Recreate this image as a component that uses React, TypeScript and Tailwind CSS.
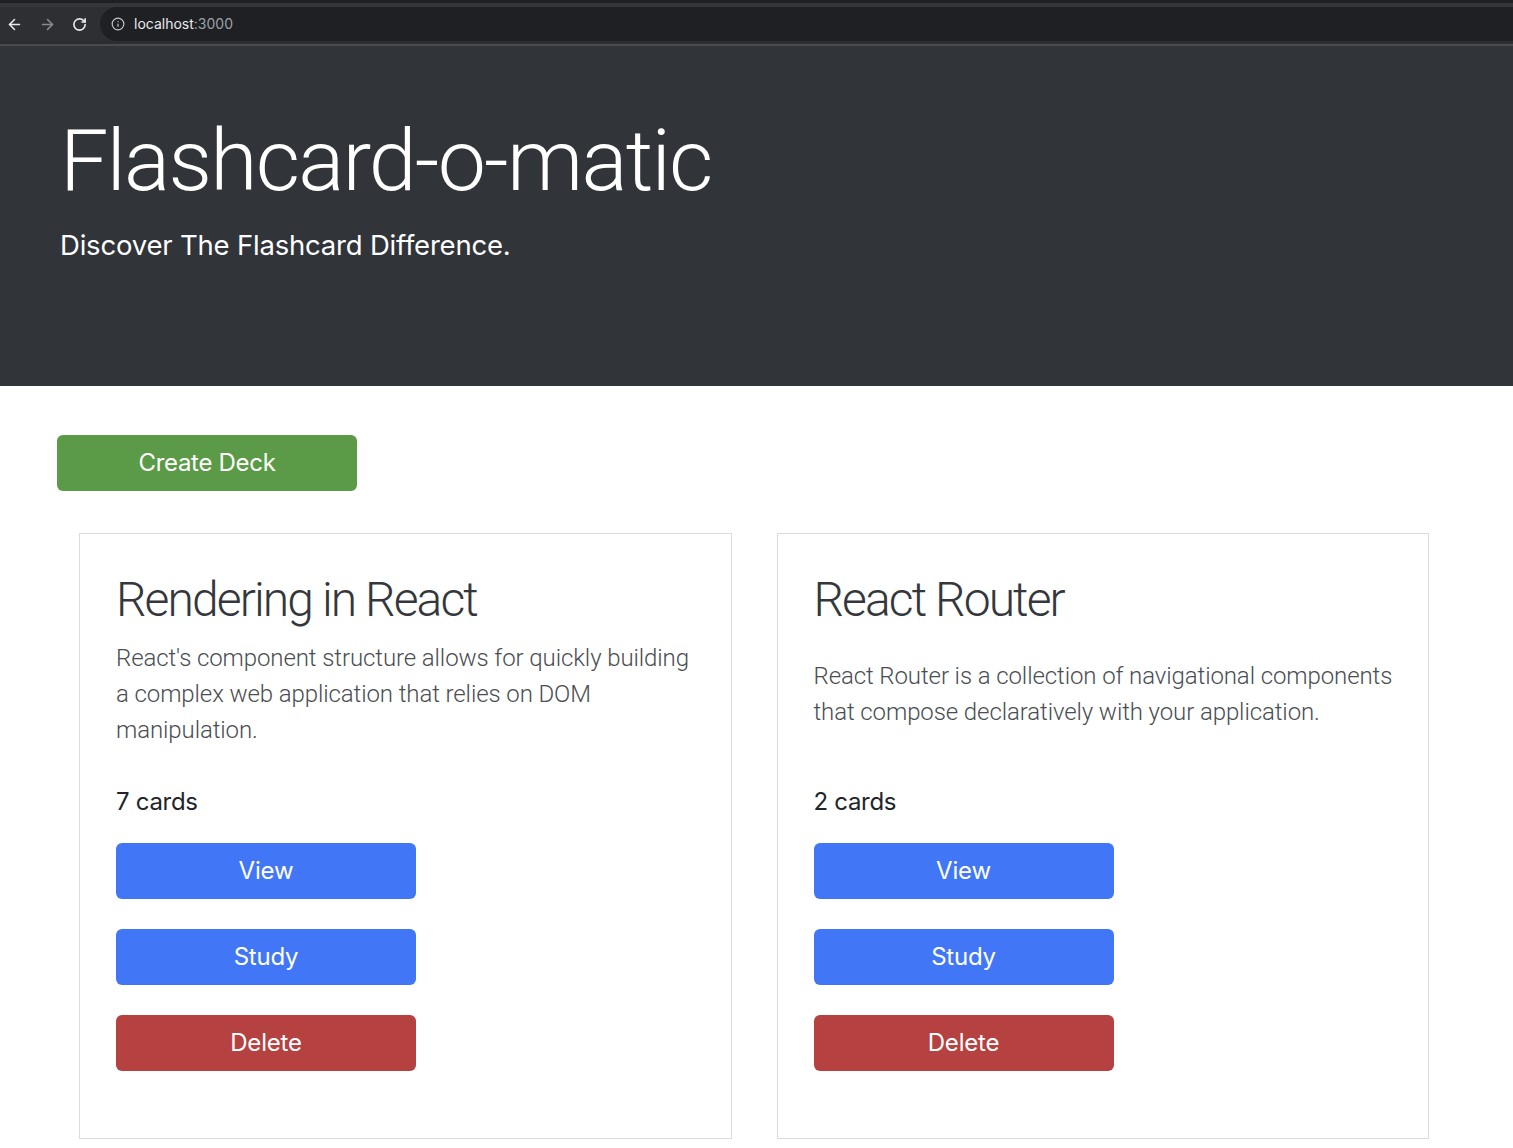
import React from "react";
import { ArrowLeft, ArrowRight, RotateCw, Info } from "lucide-react";

const decks = [
  {
    name: "Rendering in React",
    lines: [
      "React's component structure allows for quickly building",
      "a complex web application that relies on DOM",
      "manipulation.",
    ],
    count: 7,
  },
  {
    name: "React Router",
    lines: [
      "React Router is a collection of navigational components",
      "that compose declaratively with your application.",
    ],
    count: 2,
  },
];

const light = { fontFamily: "Roboto, 'Noto Sans', sans-serif" };

function BrowserBar() {
  return (
    <div className="flex flex-col bg-[#2e2f33]">
      <div className="h-[3px] bg-[#1f2023]" />
      <div className="h-[4px] bg-[#35363a]" />
      <div className="flex h-[34px] items-center">
        <div className="flex w-[100px] items-center pl-[6px] gap-[16px] text-[#e8eaed]">
          <ArrowLeft size={17} strokeWidth={2.2} />
          <ArrowRight size={17} strokeWidth={2.2} className="text-[#8a8c90]" />
          <RotateCw size={15} strokeWidth={2.6} />
        </div>
        <div className="flex h-full flex-1 items-center rounded-l-full bg-[#1f2023] pl-[11px]">
          <Info size={14} strokeWidth={2} className="text-[#c4c7c5]" />
          <span className="ml-[9px] text-[14px] leading-none text-[#e8eaed]">
            localhost<span className="text-[#9aa0a6]">:3000</span>
          </span>
        </div>
      </div>
      <div className="h-[3px] bg-[#2c2d30]" />
      <div className="h-[2px] bg-[#4a4b4f]" />
    </div>
  );
}

function DeckCard({ name, lines, count }: { name: string; lines: string[]; count: number }) {
  return (
    <div className="flex flex-col border border-[#dcdcdc] bg-white px-[36px] pt-[36px] pb-[67px]">
      <h2 style={light} className="text-[48px] font-light leading-[60px] tracking-[-1.9px] text-[#34373b]">
        {name}
      </h2>
      <div className="mt-[9px] flex h-[110px] items-center">
        <p style={light} className="text-[24px] font-light leading-[36px] tracking-[-0.1px] text-[#4a4d52]">
          {lines.map((l) => (
            <span key={l} className="block whitespace-nowrap">
              {l}
            </span>
          ))}
        </p>
      </div>
      <p className="mt-[35px] text-[24px] leading-[36px] tracking-[-0.3px] text-[#212529]">{count} cards</p>
      <div className="mt-[23px] flex flex-col gap-[30px]">
        <button className="h-[56px] w-[300px] rounded-[6px] bg-[#4177f7] text-[24px] tracking-[-0.2px] text-white">View</button>
        <button className="h-[56px] w-[300px] rounded-[6px] bg-[#4177f7] text-[24px] tracking-[-0.2px] text-white">Study</button>
        <button className="h-[56px] w-[300px] rounded-[6px] bg-[#b54141] text-[24px] tracking-[-0.2px] text-white">Delete</button>
      </div>
    </div>
  );
}

export default function App() {
  return (
    <div className="min-h-[1148px] bg-white" style={{ fontFamily: "Inter, 'Noto Sans', sans-serif" }}>
      <BrowserBar />
      <header className="h-[340px] bg-[#313439] pl-[60px] pt-[64px]">
        <h1 style={light} className="text-[86px] font-light leading-[102px] tracking-[-1.8px] text-white">
          Flashcard-o-matic
        </h1>
        <p className="mt-[13px] text-[27.5px] leading-[40px] tracking-[-0.2px] text-white">
          Discover The Flashcard Difference.
        </p>
      </header>
      <main className="pb-[10px]">
        <div className="ml-[57px] mt-[49px]">
          <button className="h-[56px] w-[300px] rounded-[6px] bg-[#5b9a47] text-[24px] tracking-[-0.3px] text-white">
            Create Deck
          </button>
        </div>
        <div className="ml-[79px] mt-[42px] grid w-[1350px] grid-cols-2 gap-[45px]">
          {decks.map((d) => (
            <DeckCard key={d.name} {...d} />
          ))}
        </div>
      </main>
    </div>
  );
}
